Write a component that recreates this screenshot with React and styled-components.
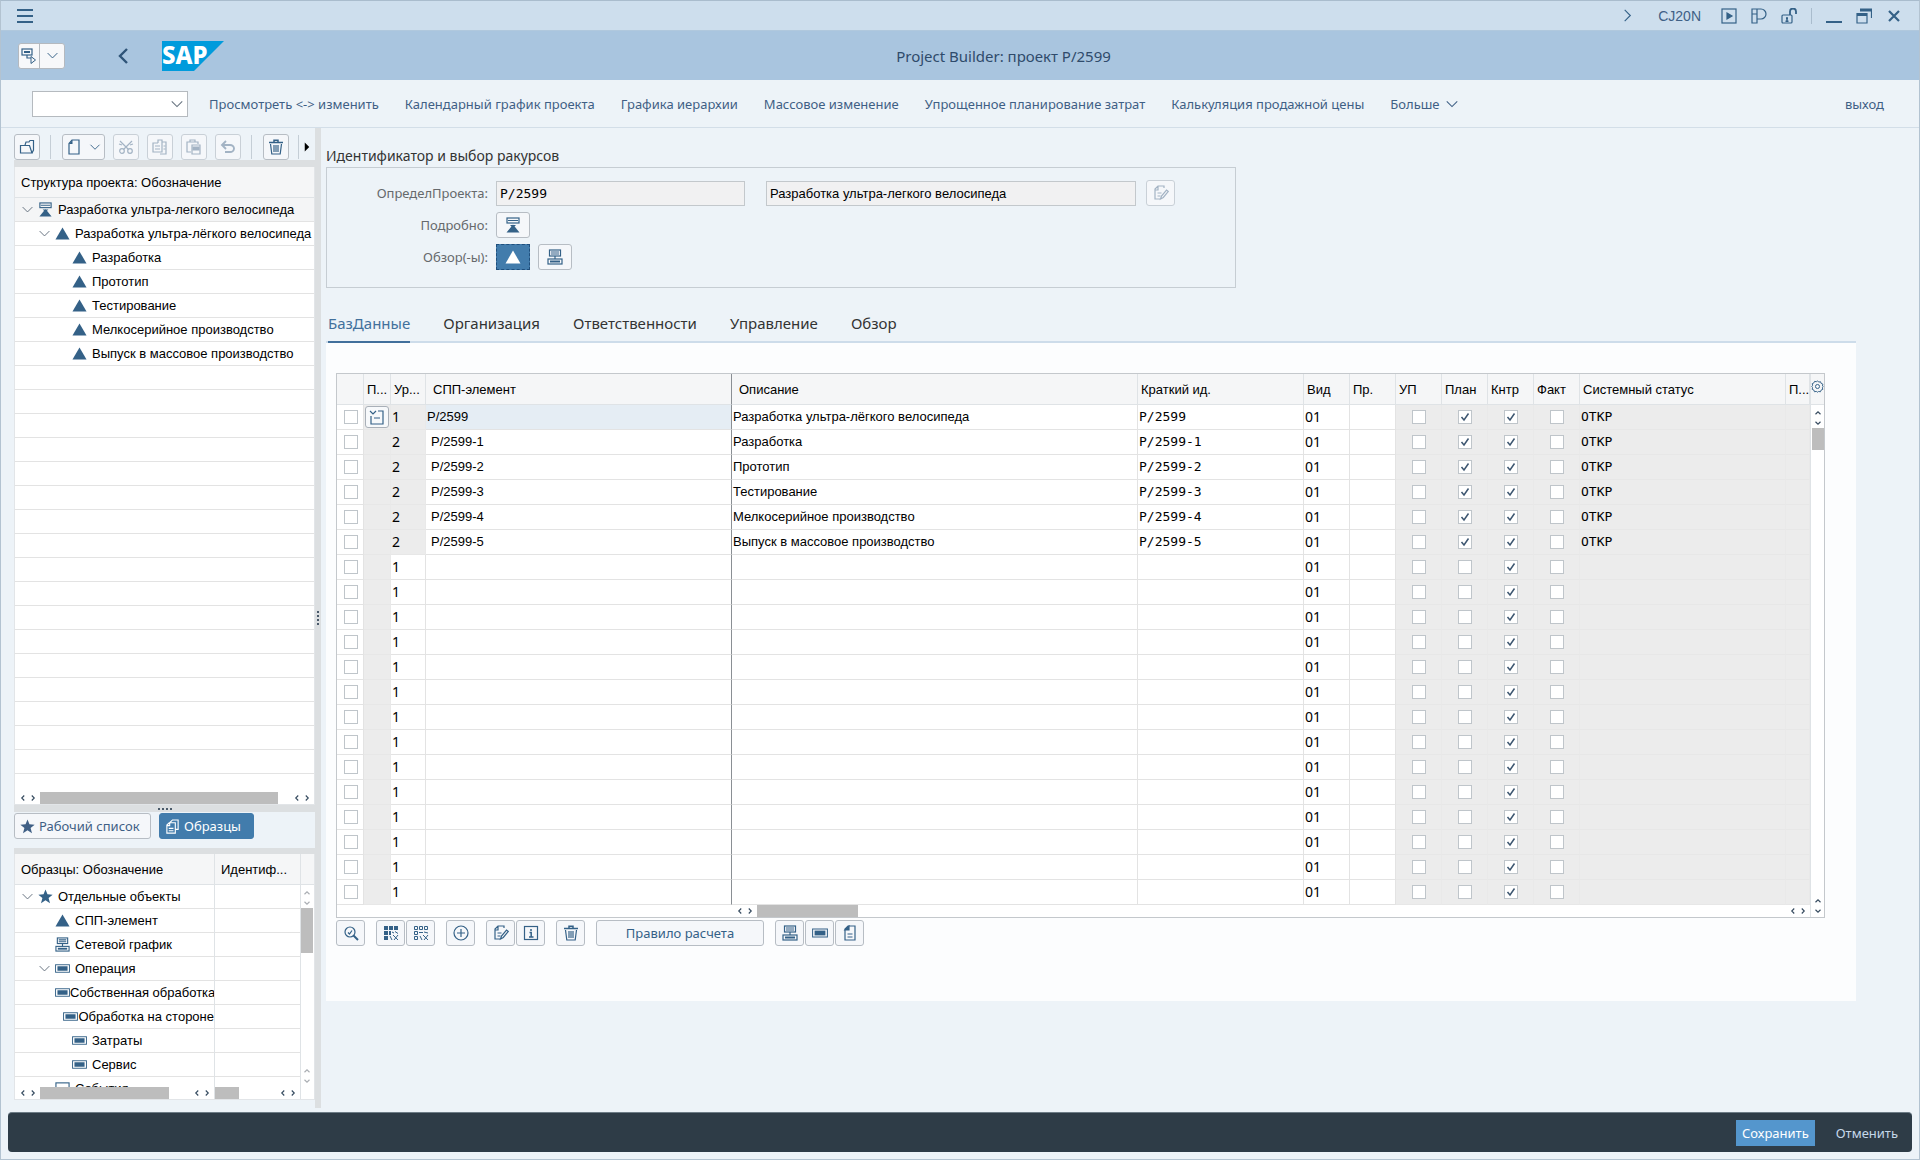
import React from "react";
import styled, { createGlobalStyle, css } from "styled-components";

const INK = "#346187";
const SANS = `"Noto Sans", "Open Sans", sans-serif`;
const TEXT = `"Liberation Sans", Arial, sans-serif`;
const MONO = `"DejaVu Sans Mono", monospace`;

const GlobalStyle = createGlobalStyle`
    *{
        box-sizing: border-box;
    }
    body{
        margin: 0;
        background-color: #edf3f8;
        font-family: ${SANS};
        font-size: 13px;
        color: #222;
    }
    button, input, select{
        font-family: inherit;
        font-size: inherit;
        margin: 0;
    }
    ul{
        list-style: none;
        margin: 0;
        padding: 0;
    }
`;

/* ---------- icons ---------- */

const Svg = styled.svg`
    display: block;
    flex: none;
    fill: none;
    stroke: currentColor;
    stroke-width: 1.2;
`;

const GLYPHS = {
    menu: <path d="M0 2h16M0 8h16M0 14h16" strokeWidth="2.2" />,
    down: <path d="M2 5l6 6 6-6" />,
    right: <path d="M5 2l6 6-6 6" />,
    back: <path d="M11 1L4 8l7 7" strokeWidth="2.4" />,
    arrowUp: <path d="M4 10l4-4 4 4" strokeWidth="1.8" />,
    arrowDown: <path d="M4 6l4 4 4-4" strokeWidth="1.8" />,
    arrowLeft: <path d="M10 4L6 8l4 4" strokeWidth="1.8" />,
    arrowRight: <path d="M6 4l4 4-4 4" strokeWidth="1.8" />,
    caret: <path d="M5 2l6 6-6 6z" fill="#000" stroke="none" />,
    context: (
        <>
            <rect x="1" y="1" width="10" height="6" />
            <path d="M3 4h6" strokeWidth="2" />
            <path d="M6 7v3h4" />
            <path d="M10 8.500v7l4.500-3.500z" strokeWidth="1" />
        </>
    ),
    play: (
        <>
            <rect x="1" y="1" width="14" height="14" />
            <path d="M6 5l5 3-5 3z" fill="currentColor" />
        </>
    ),
    layout: (
        <>
            <path d="M1 1h9a5 5 0 0 1 0 10H6v4H1zM1 6h5V1M6 6v5" />
        </>
    ),
    unlock: (
        <>
            <rect x="1" y="7" width="10" height="8" rx="1" />
            <path d="M9 7V3.500a3 3 0 0 1 6 0V6" strokeWidth="1.800" />
            <path d="M6 9v4M5 10.500h2M4.500 13.200h3" strokeWidth="1.400" />
        </>
    ),
    minimize: <path d="M0 14h16" strokeWidth="2" />,
    restore: (
        <>
            <path d="M4 2h12M1 6.500h10" strokeWidth="3" />
            <path d="M1 5v10h10V5M15.500 2v8" />
        </>
    ),
    close: <path d="M3 3l10 10M13 3L3 13" strokeWidth="2.200" />,
    open: (
        <>
            <path d="M1.500 14V6.500h9L13 14H1.500zM10.500 6.500" />
            <path d="M6 6l1-3h3l1-1.500h3.500V11L13 14" />
        </>
    ),
    page: (
        <>
            <path d="M6 1h7v14H3V4.500z" />
            <path d="M3 5h3.500V1z" fill="currentColor" stroke="none" />
        </>
    ),
    cut: (
        <>
            <circle cx="4" cy="12" r="2.300" />
            <circle cx="12" cy="12" r="2.300" />
            <path d="M2 2l8.500 8.500M14 2l-8.500 8.500M1 5l3 1M15 5l-3 1" />
        </>
    ),
    copy: (
        <>
            <path d="M6 4V1h4v12H1V4h5M10 3h4v12H8" />
            <path d="M3 7h5M3 10h5M11.500 7h2M11.500 10h2" />
        </>
    ),
    paste: (
        <>
            <path d="M5 13H1V3h11v2M4 3V1h5v2" />
            <path d="M6 6h8v9H6z" />
            <path d="M7 8h6v3H7z" fill="currentColor" />
        </>
    ),
    undo: <path d="M6 2L2 6l4 4M2 6h8a4 3.500 0 0 1 0 7H5" strokeWidth="1.900" />,
    trash: (
        <>
            <path d="M1 3.500h14M6 3V1.200h4V3" strokeWidth="1.500" />
            <path d="M2.500 5l1.300 10h8.400l1.300-10M6 6v7M8 6v7M10 6v7" />
        </>
    ),
    triangle: <path d="M8 1.500L15.500 14.500H.5z" fill="currentColor" stroke="none" />,
    definition: (
        <>
            <rect x="2" y="1" width="12" height="5" />
            <path d="M3 3.500h10" strokeWidth="1" />
            <path d="M5 8h6L8 11zM8 7.500l6.500 8h-13z" fill="currentColor" stroke="none" />
        </>
    ),
    network: (
        <>
            <rect x="2.500" y="1" width="11" height="6" />
            <path d="M4 3h8M4 5h8M8 7v3" />
            <rect x="1" y="10" width="14" height="5" />
            <path d="M3 12.500h10" strokeWidth="2" />
        </>
    ),
    activity: (
        <>
            <rect x=".6" y="4" width="14.800" height="8" strokeWidth="1" />
            <rect x="2.600" y="5.600" width="10.800" height="4.800" fill="currentColor" stroke="none" />
        </>
    ),
    box: <rect x="1" y="2" width="14" height="12" />,
    star: <path d="M8 .5l2.100 5.200 5.500.3-4.300 3.500 1.500 5.600L8 12l-4.800 3.100 1.500-5.600L.4 6l5.500-.3z" fill="currentColor" stroke="none" />,
    samples: (
        <>
            <path d="M5 4l3-3h6v10h-3" />
            <path d="M4.500 4H11v11H2V6.500zM2 7h3V4M4 10h5M4 12.500h5" />
        </>
    ),
    edit: (
        <>
            <path d="M11 3V1H5L2 4v10h5M2 5h3V1M4.500 8h4M4.500 11h3" />
            <path d="M7.500 14l1-3 5-6 1.800 1.500-5 6z" />
        </>
    ),
    zoom: (
        <>
            <circle cx="7" cy="7" r="5" />
            <path d="M5 7.500l1.500 1.500L9 5.500" />
            <path d="M10.500 10.500L15 15" strokeWidth="2" />
        </>
    ),
    selectAll: (
        <>
            <path d="M1 1h4v4H1zM6 1h4v4H6zM11 1h4v4h-4zM1 6h4v4H1zM1 11h4v4H1zM6 6h2v4H6z" fill="currentColor" stroke="none" />
            <path d="M9 7l2 1M12 6.500l3 2M7 11l2 4M10 10l5 5M15 10l-4 5" strokeWidth="1" />
        </>
    ),
    deselectAll: (
        <>
            <path d="M1.500 1.500h3v3h-3zM6.500 1.500h3v3h-3zM11.500 1.500h3v3h-3zM1.500 6.500h3v3h-3zM1.500 11.500h3v3h-3z" strokeWidth="1" />
            <path d="M6 7.500h4M11 7l4 1M7 11l2 4M10 10l5 5M15 10l-4 5" strokeWidth="1" />
        </>
    ),
    plus: (
        <>
            <circle cx="8" cy="8" r="7" />
            <path d="M8 4v8M4 8h8" />
        </>
    ),
    info: (
        <>
            <rect x="1.500" y="1.500" width="13" height="13" />
            <path d="M8 4v2M6.500 7.500H8.200V12M6 12h4.500" strokeWidth="1.500" />
        </>
    ),
    note: (
        <>
            <path d="M6 1h7v14H3V4z" />
            <path d="M3 5h4V1zM5.500 9h5M5.500 12h5" fill="currentColor" />
        </>
    ),
    collapse: (
        <>
            <path d="M1 2l3 3 3-3M2 7v8h12V2H9M5 9h6" />
        </>
    ),
    gear: (
        <>
            <path d="M8 1l1.500 1.600 2.200-.5.800 2.100 2.100.9-.5 2.200L15 8l-1 1.500.5 2-2.100 1-.8 2-2.200-.4L8 15l-1.500-1-2.200.5-.8-2.100-2-.9.400-2.200L1 8l1-1.500-.5-2 2.100-1 .8-1.800 2.200.4z" />
            <circle cx="8" cy="8" r="2.500" />
        </>
    ),
};

const Icon = ({ name, size = 16 }) => (
    <Svg viewBox="0 0 16 16" width={size} height={size} aria-hidden="true">
        {GLYPHS[name]}
    </Svg>
);

/* ---------- shell ---------- */

const Shell = styled.div`
    min-height: 100vh;
    display: flex;
    flex-direction: column;
    border: 1px solid #b3c3d1;
    border-top: 1px solid #a9bccd;
`;

const TitleBar = styled.header`
    height: 30px;
    display: flex;
    align-items: center;
    justify-content: space-between;
    padding: 0 17px 0 16px;
    background-color: #cddeed;
    border-bottom: 1px solid #b0c8dd;
    color: ${INK};
    flex: none;
`;

const WindowTools = styled.div`
    display: flex;
    align-items: center;
    gap: 14px;
`;

const TransactionCode = styled.span`
    font-family: ${TEXT};
    font-size: 14px;
    margin: 0 6px 0 9px;
    color: #3f6186;
`;

const PlainButton = styled.button`
    border: 0;
    padding: 0;
    background: none;
    color: ${props => props.$color || INK};
`;

const Divider = styled.span`
    width: 1px;
    height: 16px;
    background-color: #a9bccd;
`;

const HeaderBar = styled.div`
    height: 49px;
    display: grid;
    grid-template-columns: 1fr auto 1fr;
    align-items: center;
    padding: 0 0 0 17px;
    background-color: #a9c5df;
    flex: none;
`;

const HeaderLeft = styled.div`
    display: flex;
    align-items: center;
`;

const SplitButton = styled.div`
    display: flex;
    height: 26px;
    margin-right: 51px;
    border: 1px solid #b4b9bf;
    border-radius: 3px;
    background-color: #f7f8fa;
    color: ${INK};
    button{
        width: 24px;
        display: flex;
        align-items: center;
        justify-content: center;
        border: 0;
        padding: 0;
        background: none;
        color: inherit;
    }
    button:first-child{
        width: 21px;
        border-right: 1px solid #b4b9bf;
    }
`;

const Logo = styled.svg`
    margin-left: 30px;
    display: block;
`;

const PageTitle = styled.h1`
    margin: 0;
    padding-left: 70px;
    font-size: 15px;
    font-weight: 400;
    color: #2f4b6b;
`;

const MenuBar = styled.nav`
    height: 48px;
    display: flex;
    align-items: center;
    gap: 26px;
    padding: 0 35px 0 31px;
    border-bottom: 1px solid #d3dee8;
    flex: none;
    button{
        display: flex;
        align-items: center;
        gap: 5px;
        border: 0;
        padding: 0;
        background: none;
        font-size: 13px;
        color: #3f5f85;
        white-space: nowrap;
    }
    button:last-child{
        margin-left: auto;
    }
`;

const CommandBox = styled.div`
    display: grid;
    width: 156px;
    height: 26px;
    margin-right: -5px;
    color: #66727f;
    select, svg{
        grid-area: 1 / 1;
    }
    svg{
        place-self: center end;
        margin-right: 4px;
        pointer-events: none;
    }
    select{
        appearance: none;
        border: 1px solid #b5babf;
        background-color: #fff;
    }
`;

const Workspace = styled.div`
    flex: 1;
    display: flex;
    min-height: 0;
`;

/* ---------- left side ---------- */

const Side = styled.aside`
    width: 301px;
    margin-left: 13px;
    display: flex;
    flex-direction: column;
    flex: none;
    padding-bottom: 12px;
`;

const Splitter = styled.div`
    width: 6px;
    margin-bottom: 4px;
    background-color: #dcdfe1;
    display: flex;
    align-items: center;
    justify-content: center;
    flex: none;
`;

const SplitterGrip = styled.span`
    width: 2px;
    height: 14px;
    background: repeating-linear-gradient(to bottom, #4a5a6a 0 2px, transparent 2px 4px);
`;

const ToolRow = styled.div`
    display: flex;
    align-items: center;
    height: 32px;
    padding-top: 6px;
    gap: 8px;
    flex: none;
`;

const ToolButton = styled.button`
    width: ${props => props.$width || 26}px;
    height: 26px;
    display: flex;
    align-items: center;
    justify-content: center;
    gap: 7px;
    flex: none;
    padding: 0;
    border: 1px solid #b7bdc4;
    border-radius: 3px;
    background-color: #f5f7fa;
    color: ${INK};
    &:disabled{
        border-color: #c9d0d7;
        color: #a3b3c4;
    }
`;

const ToolGap = styled.span`
    width: 1px;
    height: 24px;
    background-color: #c5ced6;
    margin: 0 ${props => props.$right || 3}px 0 ${props => props.$left || 2}px;
`;

const Strip = styled.div`
    height: ${props => props.$height || 7}px;
    background-color: #dcdfe1;
    display: flex;
    align-items: center;
    justify-content: center;
    flex: none;
`;

const StripGrip = styled.span`
    width: 14px;
    height: 2px;
    background: repeating-linear-gradient(to right, #4a5a6a 0 2px, transparent 2px 4px);
`;

const Tree = styled.section`
    display: flex;
    flex-direction: column;
    border: 1px solid #e2e5e8;
    border-top: 0;
    background-color: #fff;
    font-family: ${TEXT};
    color: #000;
    overflow: hidden;
    ${props => props.$grow ? css`
        flex: 1 1 0;
        min-height: 300px;
    ` : css`
        flex: none;
        height: 246px;
    `}
`;

const TreeHead = styled.div`
    height: 31px;
    display: flex;
    align-items: center;
    flex: none;
    background-color: #f5f6f7;
    border-bottom: 1px solid #dfe3e6;
    font-size: 13px;
`;

const TreeHeadCell = styled.div`
    padding-left: 6px;
    align-self: stretch;
    display: flex;
    align-items: center;
    width: ${props => props.$width ? `${props.$width}px` : "auto"};
    border-right: ${props => props.$width ? "1px solid #dfe3e6" : "0"};
`;

const TreeBody = styled.ul`
    flex: 1 1 0;
    min-height: 0;
    overflow: hidden;
    background: repeating-linear-gradient(to bottom, transparent 0 23px, #e3e3e3 23px 24px);
`;

const TreeItem = styled.li`
    height: 24px;
    display: flex;
    align-items: center;
    padding-left: ${props => 6 + props.$level * 17}px;
    border-bottom: 1px solid #e3e3e3;
    background-color: ${props => props.$active ? "#f4f5f6" : "transparent"};
    font-size: 13px;
    white-space: nowrap;
    overflow: hidden;
`;

const TreeToggle = styled.span`
    width: 17px;
    color: #66727f;
`;

const TreeIcon = styled.span`
    width: 20px;
    color: ${INK};
`;

const TreeColumns = styled.div`
    flex: 1;
    min-height: 0;
    display: grid;
    grid-template-columns: 200px 1fr 13px;
`;

const TreeColumn = styled.div`
    display: flex;
    flex-direction: column;
    min-width: 0;
    border-right: 1px solid #dfe3e6;
`;

const HScroll = styled.div`
    height: 12px;
    display: flex;
    align-items: center;
    flex: none;
    background-color: ${props => props.$plain ? "transparent" : "#fff"};
    color: #34495e;
`;

const VScroll = styled.div`
    width: 12px;
    flex: 1;
    display: flex;
    flex-direction: column;
    align-items: center;
    color: ${props => props.$faint ? "#a9adb2" : "#34495e"};
`;

const Thumb = styled.span`
    background-color: #bdbdbd;
    align-self: stretch;
    flex: none;
    margin-left: ${props => props.$offset || 0}px;
    ${props => props.$vertical ? css`height: ${props.$size}px;` : css`width: ${props.$size}px;`}
`;

const ArrowPair = styled.span`
    display: flex;
    flex-direction: ${props => props.$vertical ? "column" : "row"};
    flex: none;
    padding: ${props => props.$vertical ? "3px 0 0" : "0 2px 0 3px"};
    ${props => props.$end && (props.$vertical ? css`margin-top: auto; padding-bottom: 1px;` : css`margin-left: auto;`)}
`;

const Arrows = ({ vertical, end }) => (
    <ArrowPair $vertical={vertical} $end={end}>
        <Icon name={vertical ? "arrowUp" : "arrowLeft"} size={10} />
        <Icon name={vertical ? "arrowDown" : "arrowRight"} size={10} />
    </ArrowPair>
);

const SideTabs = styled.div`
    height: 36px;
    display: flex;
    gap: 8px;
    padding-top: 1px;
    flex: none;
`;

const SideTab = styled.button`
    height: 26px;
    width: ${props => props.$width}px;
    display: flex;
    align-items: center;
    gap: 4px;
    padding: 0 5px;
    border: 1px solid ${props => props.$active ? "#427cac" : "#b7bdc4"};
    border-radius: 3px;
    background-color: ${props => props.$active ? "#427cac" : "#f5f7fa"};
    color: ${props => props.$active ? "#fff" : "#3f5f85"};
    font-size: 13px;
    white-space: nowrap;
`;

/* ---------- right side ---------- */

const Main = styled.main`
    flex: 1;
    min-width: 0;
    padding: 16px 63px 0 5px;
`;

const SectionTitle = styled.h2`
    margin: 0;
    height: 23px;
    line-height: 24px;
    font-size: 14px;
    font-weight: 400;
    color: #333;
`;

const GroupBox = styled.section`
    max-width: 910px;
    height: 121px;
    display: flex;
    flex-direction: column;
    gap: 6px;
    padding: 12px 0 0;
    border: 1px solid #c6cdd3;
`;

const FormRow = styled.div`
    display: flex;
    align-items: center;
    height: 26px;
    > label, > span{
        width: 161px;
        margin-right: 8px;
        text-align: right;
        color: #66696c;
    }
`;

const Field = styled.input`
    width: ${props => props.$width}px;
    height: 25px;
    margin-right: ${props => props.$gap}px;
    padding: 0 3px;
    border: 1px solid #c3c8cc;
    background-color: #f1f1f2;
    font-family: ${props => props.$mono ? MONO : TEXT};
    font-size: 13px;
    color: #000;
`;

const ViewButton = styled(ToolButton)`
    width: 34px;
    margin-right: 8px;
    ${props => props.$active && css`
        border: 1px dashed #1f4f7d;
        border-radius: 0;
        background-color: #427cac;
        color: #fff;
    `}
`;

const Tabs = styled.div`
    display: flex;
    gap: 33px;
    margin-top: 17px;
    padding-left: 2px;
    height: 38px;
    border-bottom: 2px solid #cddcea;
`;

const Tab = styled.button`
    height: 38px;
    padding: 0;
    border: 0;
    border-bottom: 2px solid ${props => props.$active ? "#42709c" : "transparent"};
    background: none;
    font-size: 15px;
    color: ${props => props.$active ? "#42709c" : "#333"};
`;

const Panel = styled.section`
    padding: 30px 31px 55px 10px;
    background-color: #fcfdfe;
`;

const GridFrame = styled.div`
    display: grid;
    grid-template-columns: 1fr 14px;
    border: 1px solid #c4c8cc;
    background-color: #fff;
`;

const GridSide = styled.div`
    display: flex;
    flex-direction: column;
    align-items: center;
    border-left: 1px solid #dfe3e6;
`;

const GridSideHead = styled.div`
    height: 31px;
    align-self: stretch;
    display: flex;
    align-items: center;
    justify-content: center;
    padding-bottom: 5px;
    background-color: #f5f6f7;
    border-bottom: 1px solid #dfe3e6;
`;

const Grid = styled.table`
    width: 100%;
    table-layout: fixed;
    border-collapse: separate;
    border-spacing: 0;
    color: #000;
`;

const HeadCell = styled.th`
    width: ${props => props.$width ? `${props.$width}px` : "auto"};
    height: 31px;
    padding: 0 0 0 ${props => props.$pad || 3}px;
    border-right: 1px solid ${props => props.$freeze ? "#8a8f94" : "#dfe3e6"};
    border-bottom: 1px solid #dfe3e6;
    background-color: #f5f6f7;
    font-family: ${TEXT};
    font-size: 13px;
    font-weight: 400;
    text-align: left;
    white-space: nowrap;
    overflow: hidden;
`;

const Cell = styled.td`
    height: 25px;
    padding: 0 0 0 ${props => props.$pad || 1}px;
    border-right: 1px solid ${props => props.$freeze ? "#8a8f94" : props.$gray ? "#e9e9e9" : "#e3e3e3"};
    border-bottom: 1px solid ${props => props.$gray ? "#e7e7e7" : "#e3e3e3"};
    background-color: ${props => props.$active ? "#e5edf4" : props.$gray ? "#ececec" : "#fff"};
    font-family: ${props => props.$mono ? MONO : props.$digits ? SANS : TEXT};
    font-size: ${props => props.$digits ? 14 : 13}px;
    line-height: 20px;
    white-space: nowrap;
    overflow: hidden;
`;

const Check = styled.input.attrs({ type: "checkbox" })`
    appearance: none;
    display: block;
    width: 14px;
    height: 14px;
    margin: 0 0 0 ${props => props.$left || 15}px;
    border: 1px solid #bfc5ca;
    background-color: #fff;
    &:checked{
        background-image: url("data:image/svg+xml,%3Csvg xmlns='http://www.w3.org/2000/svg' viewBox='0 0 12 12'%3E%3Cpath d='M2.500 6l2.500 3L9.500 2.500' fill='none' stroke='%233d5670' stroke-width='1.500'/%3E%3C/svg%3E");
    }
`;

const NodeButton = styled.button`
    display: flex;
    align-items: center;
    justify-content: center;
    width: 24px;
    height: 22px;
    padding: 0;
    border: 1px solid #a9b0b8;
    border-radius: 3px;
    background-color: #f7f9fb;
    color: ${INK};
`;

const GridScroll = styled.div`
    padding-left: 395px;
`;

const GridTools = styled.div`
    display: flex;
    gap: 1px;
    margin-top: 2px;
    > span{
        width: 9px;
    }
`;

/* ---------- footer ---------- */

const Footer = styled.footer`
    height: 40px;
    display: flex;
    align-items: center;
    justify-content: flex-end;
    gap: 15px;
    margin: 0 7px 7px;
    padding-right: 14px;
    border-top: 1px solid #6d7c86;
    border-radius: 4px;
    background-color: #2e3c47;
    flex: none;
`;

const FooterButton = styled.button`
    height: 26px;
    padding: 0 6px;
    border: 0;
    background-color: ${props => props.$primary ? "#5496cd" : "transparent"};
    color: ${props => props.$primary ? "#fff" : "#c5d8ea"};
    font-size: 13px;
    margin-right: ${props => props.$primary ? 0 : -6}px;
`;

/* ---------- data ---------- */

const MENU = [
    "Просмотреть <-> изменить",
    "Календарный график проекта",
    "Графика иерархии",
    "Массовое изменение",
    "Упрощенное планирование затрат",
    "Калькуляция продажной цены",
];

const PROJECT_TREE = [
    { level: 0, icon: "definition", open: true, active: true, text: "Разработка ультра-легкого велосипеда" },
    { level: 1, icon: "triangle", open: true, text: "Разработка ультра-лёгкого велосипеда" },
    { level: 2, icon: "triangle", text: "Разработка" },
    { level: 2, icon: "triangle", text: "Прототип" },
    { level: 2, icon: "triangle", text: "Тестирование" },
    { level: 2, icon: "triangle", text: "Мелкосерийное производство" },
    { level: 2, icon: "triangle", text: "Выпуск в массовое производство" },
];

const SAMPLE_TREE = [
    { level: 0, icon: "star", open: true, text: "Отдельные объекты" },
    { level: 1, icon: "triangle", text: "СПП-элемент" },
    { level: 1, icon: "network", text: "Сетевой график" },
    { level: 1, icon: "activity", open: true, text: "Операция" },
    { level: 2, icon: "activity", text: "Собственная обработка" },
    { level: 2, icon: "activity", text: "Обработка на стороне" },
    { level: 2, icon: "activity", text: "Затраты" },
    { level: 2, icon: "activity", text: "Сервис" },
    { level: 1, icon: "box", text: "События" },
];

const ELEMENTS = [
    { id: "P/2599", text: "Разработка ультра-лёгкого велосипеда" },
    { id: "P/2599-1", text: "Разработка" },
    { id: "P/2599-2", text: "Прототип" },
    { id: "P/2599-3", text: "Тестирование" },
    { id: "P/2599-4", text: "Мелкосерийное производство" },
    { id: "P/2599-5", text: "Выпуск в массовое производство" },
];

const ROWS = Array.from({ length: 20 }, (_, i) => ELEMENTS[i] || null);

const COLUMNS = [
    { label: "", width: 27 },
    { label: "П...", width: 27 },
    { label: "Ур...", width: 35 },
    { label: "СПП-элемент", width: 306, pad: 7, freeze: true },
    { label: "Описание", pad: 7 },
    { label: "Краткий ид.", width: 166 },
    { label: "Вид", width: 46 },
    { label: "Пр.", width: 46 },
    { label: "УП", width: 46 },
    { label: "План", width: 46 },
    { label: "Кнтр", width: 46 },
    { label: "Факт", width: 46 },
    { label: "Системный статус", width: 206 },
    { label: "П...", width: 24 },
];

const TABS = ["БазДанные", "Организация", "Ответственности", "Управление", "Обзор"];

/* ---------- parts ---------- */

const TreeRows = ({ items }) => (
    <TreeBody>
        {items.map(item => (
            <TreeItem key={item.text} $level={item.level} $active={item.active}>
                <TreeToggle>{item.open && <Icon name="down" size={13} />}</TreeToggle>
                <TreeIcon><Icon name={item.icon} size={15} /></TreeIcon>
                {item.text}
            </TreeItem>
        ))}
    </TreeBody>
);

const GridRow = ({ element, index }) => (
    <tr>
        <Cell><Check $left={6} aria-label={`Строка ${index + 1}`} /></Cell>
        <Cell $gray>
            {index === 0 && <NodeButton aria-label="Свернуть"><Icon name="collapse" /></NodeButton>}
        </Cell>
        <Cell $digits $gray={Boolean(element)}>{element && index > 0 ? 2 : 1}</Cell>
        <Cell $freeze $active={index === 0} $pad={index === 0 ? 1 : 5}>{element && element.id}</Cell>
        <Cell>{element && element.text}</Cell>
        <Cell $mono>{element && element.id}</Cell>
        <Cell $digits>01</Cell>
        <Cell />
        <Cell $gray><Check disabled aria-label="УП" /></Cell>
        <Cell $gray><Check disabled checked={Boolean(element)} readOnly aria-label="План" /></Cell>
        <Cell $gray><Check disabled checked readOnly aria-label="Кнтр" /></Cell>
        <Cell $gray><Check disabled aria-label="Факт" /></Cell>
        <Cell $mono $gray>{element && "ОТКР"}</Cell>
        <Cell $gray />
    </tr>
);

const Sidebar = () => (
    <Side>
        <ToolRow>
            <ToolButton aria-label="Открыть"><Icon name="open" /></ToolButton>
            <ToolGap />
            <ToolButton $width={43} aria-label="Создать">
                <Icon name="page" />
                <Icon name="down" size={12} />
            </ToolButton>
            <ToolButton disabled aria-label="Вырезать"><Icon name="cut" /></ToolButton>
            <ToolButton disabled aria-label="Копировать"><Icon name="copy" /></ToolButton>
            <ToolButton disabled aria-label="Вставить"><Icon name="paste" /></ToolButton>
            <ToolButton disabled aria-label="Отменить действие"><Icon name="undo" /></ToolButton>
            <ToolGap />
            <ToolButton aria-label="Удалить"><Icon name="trash" /></ToolButton>
            <ToolGap $left={1} $right={-6} />
            <PlainButton aria-label="Ещё"><Icon name="caret" size={12} /></PlainButton>
        </ToolRow>
        <Strip />
        <Tree $grow>
            <TreeHead><TreeHeadCell>Структура проекта: Обозначение</TreeHeadCell></TreeHead>
            <TreeRows items={PROJECT_TREE} />
            <HScroll>
                <Arrows />
                <Thumb $size={238} />
                <Arrows end />
            </HScroll>
        </Tree>
        <Strip><StripGrip /></Strip>
        <SideTabs>
            <SideTab $width={137}><Icon name="star" size={15} />Рабочий список</SideTab>
            <SideTab $width={95} $active><Icon name="samples" size={15} />Образцы</SideTab>
        </SideTabs>
        <Strip $height={6} />
        <Tree>
            <TreeColumns>
                <TreeColumn>
                    <TreeHead><TreeHeadCell>Образцы: Обозначение</TreeHeadCell></TreeHead>
                    <TreeRows items={SAMPLE_TREE} />
                    <HScroll>
                        <Arrows />
                        <Thumb $size={129} />
                        <Arrows end />
                    </HScroll>
                </TreeColumn>
                <TreeColumn>
                    <TreeHead><TreeHeadCell>Идентиф...</TreeHeadCell></TreeHead>
                    <TreeBody />
                    <HScroll>
                        <Thumb $size={24} />
                        <Arrows end />
                    </HScroll>
                </TreeColumn>
                <div style={{ display: "flex", flexDirection: "column" }}>
                    <TreeHead />
                    <VScroll $faint>
                        <Arrows vertical />
                        <Thumb $vertical $size={45} />
                        <Arrows vertical end />
                    </VScroll>
                    <HScroll />
                </div>
            </TreeColumns>
        </Tree>
    </Side>
);

const ProjectGrid = () => (
    <GridFrame>
        <div>
            <Grid>
                <thead>
                    <tr>
                        {COLUMNS.map((column, i) => (
                            <HeadCell key={i} $width={column.width} $pad={column.pad} $freeze={column.freeze}>
                                {column.label}
                            </HeadCell>
                        ))}
                    </tr>
                </thead>
                <tbody>
                    {ROWS.map((element, i) => <GridRow key={i} element={element} index={i} />)}
                </tbody>
            </Grid>
            <GridScroll>
                <HScroll>
                    <Arrows />
                    <Thumb $size={101} />
                    <Arrows end />
                </HScroll>
            </GridScroll>
        </div>
        <GridSide>
            <GridSideHead>
                <PlainButton aria-label="Настройки"><Icon name="gear" size={13} /></PlainButton>
            </GridSideHead>
            <VScroll>
                <Arrows vertical />
                <Thumb $vertical $size={22} />
                <Arrows vertical end />
            </VScroll>
        </GridSide>
    </GridFrame>
);

const App = () => (
    <Shell>
        <GlobalStyle />
        <TitleBar>
            <PlainButton aria-label="Меню"><Icon name="menu" /></PlainButton>
            <WindowTools>
                <PlainButton aria-label="Показать"><Icon name="right" size={15} /></PlainButton>
                <TransactionCode>CJ20N</TransactionCode>
                <PlainButton aria-label="Выполнить"><Icon name="play" /></PlainButton>
                <PlainButton aria-label="Макет"><Icon name="layout" /></PlainButton>
                <PlainButton aria-label="Блокировка"><Icon name="unlock" /></PlainButton>
                <Divider />
                <PlainButton aria-label="Свернуть окно"><Icon name="minimize" /></PlainButton>
                <PlainButton aria-label="Восстановить окно"><Icon name="restore" /></PlainButton>
                <PlainButton aria-label="Закрыть окно"><Icon name="close" /></PlainButton>
            </WindowTools>
        </TitleBar>
        <HeaderBar>
            <HeaderLeft>
                <SplitButton>
                    <button aria-label="Объект"><Icon name="context" /></button>
                    <button aria-label="Выбрать объект"><Icon name="down" size={13} /></button>
                </SplitButton>
                <PlainButton aria-label="Назад" $color="#2f5478"><Icon name="back" /></PlainButton>
                <Logo width="62" height="30" viewBox="0 0 62 30" role="img" aria-label="SAP">
                    <path d="M0 0h62L32 30H0z" fill="#009bdc" />
                    <text x="0" y="23" fill="#fff" fontFamily="Noto Sans" fontWeight="800" fontSize="24">SAP</text>
                </Logo>
            </HeaderLeft>
            <PageTitle>Project Builder: проект P/2599</PageTitle>
        </HeaderBar>
        <MenuBar>
            <CommandBox>
                <select aria-label="Код транзакции"><option value="" /></select>
                <Icon name="down" size={14} />
            </CommandBox>
            {MENU.map(item => <button key={item}>{item}</button>)}
            <button>Больше<Icon name="down" size={14} /></button>
            <button>выход</button>
        </MenuBar>
        <Workspace>
            <Sidebar />
            <Splitter><SplitterGrip /></Splitter>
            <Main>
                <SectionTitle>Идентификатор и выбор ракурсов</SectionTitle>
                <GroupBox>
                    <FormRow>
                        <label htmlFor="definition">ОпределПроекта:</label>
                        <Field id="definition" $mono $width={249} $gap={21} readOnly value="P/2599" />
                        <Field aria-label="Название проекта" $width={370} $gap={10} readOnly value="Разработка ультра-легкого велосипеда" />
                        <ToolButton $width={29} disabled aria-label="Изменить название"><Icon name="edit" /></ToolButton>
                    </FormRow>
                    <FormRow>
                        <span>Подробно:</span>
                        <ViewButton aria-label="Определение проекта"><Icon name="definition" /></ViewButton>
                    </FormRow>
                    <FormRow>
                        <span>Обзор(-ы):</span>
                        <ViewButton $active aria-label="Обзор СПП-элементов"><Icon name="triangle" /></ViewButton>
                        <ViewButton aria-label="Обзор сетевых графиков"><Icon name="network" /></ViewButton>
                    </FormRow>
                </GroupBox>
                <Tabs>
                    {TABS.map((tab, i) => <Tab key={tab} $active={i === 0}>{tab}</Tab>)}
                </Tabs>
                <Panel>
                    <ProjectGrid />
                    <GridTools>
                        <ToolButton $width={29} aria-label="Детали"><Icon name="zoom" /></ToolButton>
                        <span />
                        <ToolButton $width={29} aria-label="Выделить все"><Icon name="selectAll" /></ToolButton>
                        <ToolButton $width={29} aria-label="Снять выделение"><Icon name="deselectAll" /></ToolButton>
                        <span />
                        <ToolButton $width={29} aria-label="Добавить"><Icon name="plus" /></ToolButton>
                        <span />
                        <ToolButton $width={29} aria-label="Текст"><Icon name="edit" /></ToolButton>
                        <ToolButton $width={29} aria-label="Информация"><Icon name="info" /></ToolButton>
                        <span />
                        <ToolButton $width={29} aria-label="Удалить строку"><Icon name="trash" /></ToolButton>
                        <span />
                        <ToolButton $width={168}>Правило расчета</ToolButton>
                        <span />
                        <ToolButton $width={29} aria-label="Сетевой график"><Icon name="network" /></ToolButton>
                        <ToolButton $width={29} aria-label="Операция"><Icon name="activity" /></ToolButton>
                        <ToolButton $width={29} aria-label="Документ"><Icon name="note" /></ToolButton>
                    </GridTools>
                </Panel>
            </Main>
        </Workspace>
        <Footer>
            <FooterButton $primary>Сохранить</FooterButton>
            <FooterButton>Отменить</FooterButton>
        </Footer>
    </Shell>
);

export default App;
